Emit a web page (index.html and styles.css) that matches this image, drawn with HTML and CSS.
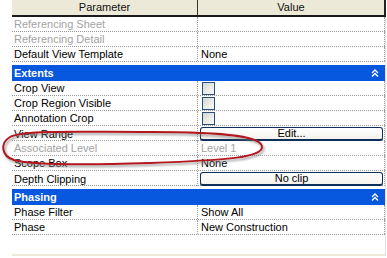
FILE: index.html
```html
<!DOCTYPE html>
<html>
<head>
<meta charset="utf-8">
<link rel="stylesheet" href="styles.css">
</head>
<body>
<div class="panel">
  <div class="head">
    <div class="hcell hparam">Parameter</div>
    <div class="hcell hvalue">Value</div>
  </div>
  <div class="body">
    <div class="row"><div class="p dim">Referencing Sheet</div><div class="v"></div></div>
    <div class="row"><div class="p dim">Referencing Detail</div><div class="v"></div></div>
    <div class="row"><div class="p">Default View Template</div><div class="v">None</div></div>
    <div class="group"><span>Extents</span><svg class="chev" width="8" height="8" viewBox="0 0 8 8"><polyline points="1,4 4,1 7,4"/><polyline points="1,7.5 4,4.5 7,7.5"/></svg></div>
    <div class="row"><div class="p">Crop View</div><div class="v"><span class="check"></span></div></div>
    <div class="row"><div class="p">Crop Region Visible</div><div class="v"><span class="check"></span></div></div>
    <div class="row"><div class="p">Annotation Crop</div><div class="v"><span class="check"></span></div></div>
    <div class="row"><div class="p">View Range</div><div class="v"><span class="btn">Edit...</span></div></div>
    <div class="row"><div class="p dim">Associated Level</div><div class="v dim">Level 1</div></div>
    <div class="row"><div class="p">Scope Box</div><div class="v">None</div></div>
    <div class="row"><div class="p">Depth Clipping</div><div class="v"><span class="btn">No clip</span></div></div>
    <div class="group"><span>Phasing</span><svg class="chev" width="8" height="8" viewBox="0 0 8 8"><polyline points="1,4 4,1 7,4"/><polyline points="1,7.5 4,4.5 7,7.5"/></svg></div>
    <div class="row"><div class="p">Phase Filter</div><div class="v">Show All</div></div>
    <div class="row"><div class="p">Phase</div><div class="v">New Construction</div></div>
  </div>
</div>
<svg class="mark" width="387" height="258" viewBox="0 0 387 258">
  <defs>
    <filter id="sh" x="-10%" y="-50%" width="120%" height="200%">
      <feDropShadow dx="1.5" dy="2" stdDeviation="1" flood-color="#777" flood-opacity="0.7"/>
    </filter>
  </defs>
  <path filter="url(#sh)" d="M 262 147 C 262 137, 232 132, 150 132 C 70 132, 22 130, 10 137 C 0 143, 1 156, 14 160 C 32 165, 90 165, 150 163 C 232 160, 262 157, 262 147 Z"/>
</svg>
</body>
</html>
```
FILE: styles.css
```css
html, body {
  margin: 0;
  padding: 0;
  background: #fff;
}
body {
  width: 387px;
  height: 258px;
  overflow: hidden;
  position: relative;
  font-family: "Liberation Sans", Arial, sans-serif;
  font-size: 11px;
  color: #000;
}
.panel {
  margin-left: 12px;
  width: 374px;
}
.head {
  display: grid;
  grid-template-columns: 186px 1fr;
  height: 15px;
  background: #ece9d8;
  border-bottom: 2px solid #1a1a1a;
}
.hcell {
  display: flex;
  align-items: center;
  justify-content: center;
  line-height: 15px;
  color: #111;
}
.hparam {
  border-right: 1px solid #333;
}
.hvalue {
  border-right: 2px solid #222;
}
.body {
  height: 237px;
  border-bottom: 2px solid #ece9d8;
  border-right: 1px solid #e2e2e2;
}
.row {
  display: grid;
  grid-template-columns: 186px 1fr;
  height: 14px;
  border-bottom: 1px dotted #9a9a9a;
}
.p, .v {
  display: flex;
  align-items: center;
  white-space: nowrap;
  line-height: 14px;
}
.p {
  padding-left: 2px;
  border-right: 1px dotted #9a9a9a;
}
.v {
  padding-left: 3px;
  border-right: 1px dotted #9a9a9a;
}
.dim {
  color: #a3a3a3;
}
.group {
  margin-top: 3px;
  height: 16px;
  background: #0757df;
  color: #fff;
  font-weight: bold;
  display: flex;
  align-items: center;
  justify-content: space-between;
  padding-left: 2px;
  padding-right: 6px;
}
.chev polyline {
  fill: none;
  stroke: #fff;
  stroke-width: 1.4;
}
.check {
  width: 11px;
  height: 11px;
  margin-left: 1px;
  border: 1px solid #2a4f78;
  background: linear-gradient(135deg, #d6d6d0 0%, #ededea 60%, #fafafa 100%);
}
.btn {
  flex: 1;
  height: 11px;
  margin: 1px 1px 0 0;
  border: 1px solid #0d2f5a;
  border-bottom-width: 2px;
  border-radius: 3px;
  background: linear-gradient(#ffffff, #f3f2ec);
  display: flex;
  align-items: center;
  justify-content: center;
  line-height: 11px;
  margin-left: -1px;
}
.mark {
  position: absolute;
  left: 0;
  top: 0;
  pointer-events: none;
}
.mark path {
  fill: none;
  stroke: #b3141f;
  stroke-width: 2;
}
```
